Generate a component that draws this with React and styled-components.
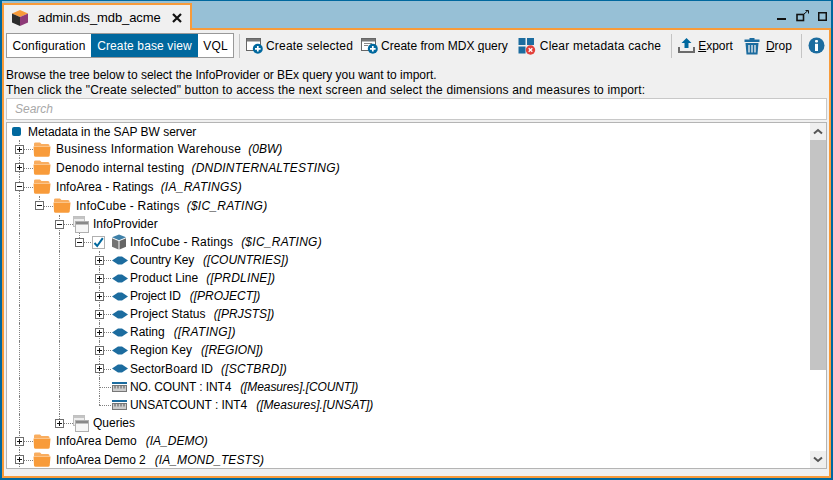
import React from "react";
import styled, { createGlobalStyle } from "styled-components";

const GlobalStyle = createGlobalStyle`
  html, body { margin: 0; padding: 0; background: #f0f0f0; }
  * { box-sizing: border-box; }
`;

const Window = styled.div`
  width: 833px;
  height: 480px;
  border: 2px solid #00689e;
  border-top-width: 1px;
  display: flex;
  flex-direction: column;
  overflow: hidden;
  font-family: "Liberation Sans", Arial, sans-serif;
  font-size: 12px;
  color: #000;
`;
const TabStrip = styled.div`
  height: 27px;
  flex: none;
  background: #97c0d6;
  display: flex;
  align-items: flex-end;
  justify-content: space-between;
`;
const Tab = styled.div`
  width: 190px;
  height: 27px;
  margin-bottom: -2px;
  position: relative;
  z-index: 1;
  background: #f0f0f0;
  border: 2px solid #f89b3a;
  border-bottom: none;
  display: flex;
  align-items: center;
  padding-left: 7px;
  font-size: 13px;
`;
const TabTitle = styled.span`
  margin-left: 9px;
  width: 134px;
  letter-spacing: -0.1px;
`;
const WindowControls = styled.div`
  display: flex;
  align-items: center;
  gap: 9px;
  padding: 0 4px 6px 0;
`;
const Body = styled.div`
  flex: 1;
  min-height: 0;
  border: 2px solid #f89b3a;
  background: #f0f0f0;
  padding: 3px 2px 7px;
  display: flex;
  flex-direction: column;
`;
const Toolbar = styled.div`
  height: 25px;
  flex: none;
  display: flex;
  align-items: center;
`;
const Segmented = styled.div`
  height: 25px;
  display: flex;
  border: 1px solid #999;
  background: #fff;
`;
const Segment = styled.div`
  width: ${(p) => p.$w}px;
  display: flex;
  align-items: center;
  justify-content: center;
  letter-spacing: 0.12px;
  background: ${(p) => (p.$active ? "#00689e" : "#fff")};
  color: ${(p) => (p.$active ? "#fff" : "#000")};
`;
const Separator = styled.div`
  width: 1px;
  height: 24px;
  background: #c4c4c4;
  margin: 0 ${(p) => p.$right}px 0 ${(p) => p.$left}px;
`;
const ToolButton = styled.div`
  display: flex;
  align-items: center;
  gap: ${(p) => p.$gap}px;
  margin-right: ${(p) => p.$after}px;
  white-space: nowrap;
  letter-spacing: ${(p) => p.$t || 0}px;
`;
const Help = styled.div`
  margin-top: 5px;
  height: 33px;
  flex: none;
  padding-top: 5px;
  line-height: 15px;
  white-space: nowrap;
`;
const HelpLine = styled.div`
  letter-spacing: ${(p) => p.$t}px;
`;
const Search = styled.div`
  height: 22px;
  flex: none;
  margin-top: 2px;
  background: #fff;
  border: 1px solid #c8c8c8;
  display: flex;
  align-items: center;
  padding-left: 8px;
  font-style: italic;
  color: #a8a8a8;
`;
const Tree = styled.div`
  margin-top: 2px;
  flex: 1;
  min-height: 0;
  background: #fff;
  border: 1px solid #b4b4b4;
  display: flex;
`;
const Rows = styled.div`
  flex: 1;
  min-width: 0;
  overflow: hidden;
  padding-left: 2px;
`;
const Row = styled.div`
  height: ${(p) => p.$h}px;
  display: flex;
  align-items: stretch;
  white-space: nowrap;
`;
const Guide = styled.div`
  width: 20px;
  flex: none;
  position: relative;
  &::before {
    content: "";
    display: ${(p) => (p.$line ? "block" : "none")};
    position: absolute;
    left: 10px;
    top: 0;
    bottom: 0;
    border-left: 1px dotted #808080;
  }
`;
const Connector = styled.div`
  width: 20px;
  flex: none;
  position: relative;
  display: flex;
  align-items: center;
  &::before {
    content: "";
    position: absolute;
    left: 10px;
    top: 0;
    bottom: ${(p) => (p.$last ? "50%" : "0")};
    border-left: 1px dotted #808080;
  }
  &::after {
    content: "";
    position: absolute;
    left: 10px;
    right: -4px;
    top: 50%;
    border-top: 1px dotted #808080;
  }
`;
const Expander = styled.div`
  position: relative;
  z-index: 1;
  margin-left: 6px;
  width: 9px;
  height: 9px;
  background: #fff;
  border: 1px solid #6e6e6e;
  &::before {
    content: "";
    position: absolute;
    left: 1px;
    right: 1px;
    top: 3px;
    height: 1px;
    background: #111;
  }
  &::after {
    content: "";
    display: ${(p) => (p.$open ? "none" : "block")};
    position: absolute;
    top: 1px;
    bottom: 1px;
    left: 3px;
    width: 1px;
    background: #111;
  }
`;
const IconSlot = styled.div`
  position: relative;
  z-index: 1;
  flex: none;
  width: ${(p) => p.$w}px;
  margin-left: ${(p) => p.$ml}px;
  display: flex;
  align-items: center;
  justify-content: center;
  background: #fff;
`;
const CheckBox = styled.div`
  position: relative;
  z-index: 1;
  flex: none;
  align-self: center;
  width: 13px;
  height: 13px;
  margin: 0 6px 0 3px;
  background: #fff;
  border: 1px solid #b0b0b0;
  display: flex;
  align-items: center;
  justify-content: center;
`;
const Label = styled.span`
  align-self: center;
  margin-left: ${(p) => p.$ml}px;
  letter-spacing: ${(p) => p.$t || 0}px;
`;
const Code = styled.span`
  align-self: center;
  margin-left: ${(p) => p.$gap}px;
  font-style: italic;
  letter-spacing: ${(p) => p.$t || 0}px;
`;
const RootMark = styled.div`
  align-self: center;
  width: 9px;
  height: 9px;
  margin-left: 3px;
  border-radius: 2px;
  background: #00689e;
`;
const Scrollbar = styled.div`
  width: 16px;
  flex: none;
  display: flex;
  flex-direction: column;
`;
const ScrollButton = styled.div`
  height: 17px;
  flex: none;
  background: #efefef;
  display: flex;
  align-items: center;
  justify-content: center;
`;
const Thumb = styled.div`
  height: 230px;
  flex: none;
  background: #c4c4c4;
`;
const Track = styled.div`
  flex: 1;
  background: #fff;
`;

const Box = () => (
  <svg width="18" height="18" viewBox="0 0 18 18">
    <path d="M9 1 L17 4.5 L9 8 L1 4.5Z" fill="#f89b3a" />
    <path d="M1 4.5 L9 8 V17 L1 13.5Z" fill="#2d2d2d" />
    <path d="M17 4.5 L9 8 V17 L17 13.5Z" fill="#8e3a78" />
  </svg>
);
const Close = () => (
  <svg width="10" height="10" viewBox="0 0 10 10">
    <path d="M1 1 L9 9 M9 1 L1 9" stroke="#111" strokeWidth="2.2" />
  </svg>
);
const Minimize = () => (
  <svg width="10" height="10" viewBox="0 0 10 10">
    <rect x="0" y="7" width="9" height="2" fill="#111" />
  </svg>
);
const Restore = () => (
  <svg width="13" height="12" viewBox="0 0 13 12">
    <rect x="1" y="4.5" width="6.5" height="6" fill="none" stroke="#111" strokeWidth="1.6" />
    <path d="M8 4 L12 0.5 M9.5 0.5 H12.5 V3.5" fill="none" stroke="#111" />
  </svg>
);
const Maximize = () => (
  <svg width="9" height="9" viewBox="0 0 9 9">
    <rect x="0.75" y="0.75" width="7.5" height="7.5" fill="none" stroke="#111" strokeWidth="1.5" />
  </svg>
);
const PlusBadge = () => (
  <>
    <circle cx="11.8" cy="11.8" r="5" fill="#00689e" />
    <path d="M9 11.8 H14.6 M11.8 9 V14.6" stroke="#fff" strokeWidth="1.7" />
  </>
);
const CreateIcon = () => (
  <svg width="17" height="17" viewBox="0 0 17 17">
    <rect x="0.5" y="1.5" width="14" height="12" fill="#fff" stroke="#666" />
    <rect x="1" y="2" width="13" height="2.5" fill="#777" />
    <PlusBadge />
  </svg>
);
const MdxIcon = () => (
  <svg width="17" height="17" viewBox="0 0 17 17">
    <rect x="0.5" y="1.5" width="14" height="12" fill="#fff" stroke="#666" />
    <rect x="1" y="2" width="13" height="2.5" fill="#777" />
    <path d="M3 6.5 H11 M3 8.5 H7" stroke="#888" />
    <PlusBadge />
  </svg>
);
const ClearIcon = () => (
  <svg width="18" height="18" viewBox="0 0 18 18">
    <rect x="0.5" y="1" width="7" height="7" fill="#1c6c9f" />
    <rect x="9" y="1" width="7" height="7" fill="#1c6c9f" />
    <rect x="0.5" y="9.5" width="7" height="7" fill="#1c6c9f" />
    <circle cx="12.5" cy="13" r="4.7" fill="#e2403a" />
    <path d="M10.7 11.2 L14.3 14.8 M14.3 11.2 L10.7 14.8" stroke="#fff" strokeWidth="1.3" />
  </svg>
);
const ExportIcon = () => (
  <svg width="17" height="17" viewBox="0 0 17 17">
    <path d="M8.5 1 L13.5 6 H10.5 V11 H6.5 V6 H3.5Z" fill="#00689e" />
    <path d="M1 10 V15 H16 V10" fill="none" stroke="#6b6b6b" strokeWidth="2" />
  </svg>
);
const TrashIcon = () => (
  <svg width="16" height="18" viewBox="0 0 16 18">
    <path d="M5.5 1 H10.5 V2.5 H15.5 V5 H0.5 V2.5 H5.5Z" fill="#1c6c9f" />
    <path d="M1.5 6 H14.5 L13.5 17.5 H2.5Z" fill="#1c6c9f" />
    <path d="M5 8 V15.5 M8 8 V15.5 M11 8 V15.5" stroke="#f0f0f0" strokeWidth="1.3" />
  </svg>
);
const InfoIcon = () => (
  <svg width="17" height="17" viewBox="0 0 17 17">
    <circle cx="8.5" cy="8.5" r="8" fill="#1c6c9f" />
    <rect x="7" y="3" width="3" height="2.6" rx="1" fill="#fff" />
    <rect x="7" y="6.8" width="3" height="7.2" fill="#fff" />
  </svg>
);
const Chevron = ({ down }) => (
  <svg width="10" height="7" viewBox="0 0 10 7">
    <path d={down ? "M1 1.5 L5 5 L9 1.5" : "M1 5.5 L5 2 L9 5.5"} fill="none" stroke="#555" strokeWidth="2" />
  </svg>
);
const Folder = () => (
  <svg width="18" height="15" viewBox="0 0 18 15">
    <path d="M1 1.8 Q1 0.5 2.5 0.5 H7 L8.5 2 H15 Q16.5 2 16.5 3.5 V4 H1Z" fill="#f9ad5f" />
    <path d="M1 4 H16.5 V4.6 H1Z" fill="#fde3c6" />
    <path d="M0.5 4.6 H17.5 L16.7 13.5 Q16.6 14.7 15 14.7 H2.5 Q1.2 14.7 1 13.5Z" fill="#f89b3a" />
  </svg>
);
const Panels = () => (
  <svg width="16" height="17" viewBox="0 0 16 17">
    <rect x="0.5" y="0.5" width="11" height="10" fill="#eee" stroke="#c0c0c0" />
    <rect x="1" y="1" width="10" height="2" fill="#c4c4c4" />
    <rect x="2.5" y="5.5" width="13" height="11" fill="#f6f6f6" stroke="#b0b0b0" />
    <rect x="3" y="6" width="12" height="2.5" fill="#888" />
  </svg>
);
const Cube = () => (
  <svg width="16" height="16" viewBox="0 0 16 16">
    <path d="M8 0.5 L15 3.3 L8 6.3 L1 3.3Z" fill="#3f80a8" />
    <path d="M1 4.3 L7.5 7 V15.5 L1 12.7Z" fill="#737373" />
    <path d="M15 4.3 L8.5 7 V15.5 L15 12.7Z" fill="#666" />
  </svg>
);
const Dimension = () => (
  <svg width="16" height="9" viewBox="0 0 16 9">
    <path d="M0 4.5 L6 0.5 H10 L16 4.5 L10 8.5 H6Z" fill="#1c6c9f" />
  </svg>
);
const Measure = () => (
  <svg width="15" height="10" viewBox="0 0 15 10">
    <rect x="0" y="0" width="15" height="2" fill="#1c6c9f" />
    <rect x="0.5" y="3.5" width="14" height="6" fill="#ccc" stroke="#777" />
    <path d="M3 4 V6.5 M6 4 V6.5 M9 4 V6.5 M12 4 V6.5" stroke="#555" />
  </svg>
);
const Check = () => (
  <svg width="11" height="11" viewBox="0 0 11 11">
    <path d="M1.5 6 L4.2 9 L9.8 1.2" fill="none" stroke="#00689e" strokeWidth="2" />
  </svg>
);

const dims = [true, false, true, false];

// guides: one flag per ancestor column, true where the parent's line runs on
// t / ct nudge tracking so the labels end where the reference's hinted text does
const rows = [
  { h: 18, guides: [], kind: "folder", label: "Business Information Warehouse", t: 0.3, code: "(0BW)", gap: 7 },
  { h: 19, guides: [], kind: "folder", label: "Denodo internal testing", t: 0.22, code: "(DNDINTERNALTESTING)", ct: 0.2, gap: 7 },
  { h: 19, guides: [], kind: "folder", open: true, label: "InfoArea - Ratings", t: 0.05, code: "(IA_RATINGS)", ct: 0.25, gap: 7 },
  { h: 19, guides: [true], last: true, kind: "folder", open: true, label: "InfoCube - Ratings", t: 0.2, code: "($IC_RATING)", ct: 0.25, gap: 7 },
  { h: 18, guides: [true, false], kind: "panels", open: true, label: "InfoProvider" },
  { h: 18, guides: [true, false, true], last: true, kind: "cube", open: true, label: "InfoCube - Ratings", t: 0.17, code: "($IC_RATING)", ct: 0.25, gap: 8 },
  { h: 18, guides: dims, kind: "dim", label: "Country Key", t: -0.18, code: "([COUNTRIES])", gap: 9 },
  { h: 18, guides: dims, kind: "dim", label: "Product Line", t: 0.08, code: "([PRDLINE])", ct: 0.2, gap: 8 },
  { h: 18, guides: dims, kind: "dim", label: "Project ID", t: -0.2, code: "([PROJECT])", gap: 9 },
  { h: 18, guides: dims, kind: "dim", label: "Project Status", t: 0.07, code: "([PRJSTS])", gap: 8 },
  { h: 18, guides: dims, kind: "dim", label: "Rating", code: "([RATING])", ct: 0.3, gap: 9 },
  { h: 18, guides: dims, kind: "dim", label: "Region Key", code: "([REGION])", gap: 9 },
  { h: 19, guides: dims, kind: "dim", label: "SectorBoard ID", t: 0.07, code: "([SCTBRD])", ct: 0.2, gap: 8 },
  { h: 18, guides: dims, kind: "measure", leaf: true, label: "NO. COUNT : INT4", t: -0.12, code: "([Measures].[COUNT])", ct: -0.1, gap: 9 },
  { h: 18, guides: dims, kind: "measure", leaf: true, last: true, label: "UNSATCOUNT : INT4", t: -0.06, code: "([Measures].[UNSAT])", gap: 9 },
  { h: 18, guides: [true, false], last: true, kind: "panels", label: "Queries" },
  { h: 18, guides: [], kind: "folder", label: "InfoArea Demo", code: "(IA_DEMO)", gap: 9 },
  { h: 19, guides: [], kind: "folder", label: "InfoArea Demo 2", t: -0.07, code: "(IA_MOND_TESTS)", ct: 0.1, gap: 9 },
];

function RowIcon({ kind }) {
  if (kind === "folder") return <IconSlot $w={18} $ml={4}><Folder /></IconSlot>;
  if (kind === "panels") return <IconSlot $w={16} $ml={4}><Panels /></IconSlot>;
  if (kind === "dim") return <IconSlot $w={16} $ml={3}><Dimension /></IconSlot>;
  if (kind === "measure") return <IconSlot $w={15} $ml={3}><Measure /></IconSlot>;
  return (
    <>
      <CheckBox><Check /></CheckBox>
      <IconSlot $w={16} $ml={0}><Cube /></IconSlot>
    </>
  );
}

function TreeRow({ row }) {
  const gap = { folder: 5, panels: 4, dim: 2 }[row.kind] || 3;
  return (
    <Row $h={row.h}>
      {row.guides.map((line, i) => (
        <Guide key={i} $line={line} />
      ))}
      <Connector $last={row.last}>
        {!row.leaf && <Expander $open={row.open} />}
      </Connector>
      <RowIcon kind={row.kind} />
      <Label $ml={gap} $t={row.t}>{row.label}</Label>
      {row.code && <Code $gap={row.gap} $t={row.ct}>{row.code}</Code>}
    </Row>
  );
}

export default function App() {
  return (
    <>
      <GlobalStyle />
      <Window>
        <TabStrip>
          <Tab>
            <Box />
            <TabTitle>admin.ds_mdb_acme</TabTitle>
            <Close />
          </Tab>
          <WindowControls>
            <Minimize />
            <Restore />
            <Maximize />
          </WindowControls>
        </TabStrip>
        <Body>
          <Toolbar>
            <Segmented>
              <Segment $w={84}>Configuration</Segment>
              <Segment $w={107} $active>Create base view</Segment>
              <Segment $w={35}>VQL</Segment>
            </Segmented>
            <Separator $left={5} $right={6} />
            <ToolButton $gap={3} $after={8} $t={0.2}><CreateIcon />Create selected</ToolButton>
            <ToolButton $gap={3} $after={10}><MdxIcon /><span>Create from MDX <u>q</u>uery</span></ToolButton>
            <ToolButton $gap={4} $after={10} $t={0.2}><ClearIcon />Clear metadata cache</ToolButton>
            <Separator $left={0} $right={6} />
            <ToolButton $gap={3} $after={11}><ExportIcon /><span><u>E</u>xport</span></ToolButton>
            <ToolButton $gap={6} $after={9}><TrashIcon /><span><u>D</u>rop</span></ToolButton>
            <Separator $left={0} $right={6} />
            <InfoIcon />
          </Toolbar>
          <Help>
            <HelpLine $t={-0.02}>Browse the tree below to select the InfoProvider or BEx query you want to import.</HelpLine>
            <HelpLine $t={0.16}>Then click the "Create selected" button to access the next screen and select the dimensions and measures to import:</HelpLine>
          </Help>
          <Search>Search</Search>
          <Tree>
            <Rows>
              <Row $h={17}>
                <RootMark />
                <Label $ml={7} $t={-0.03}>Metadata in the SAP BW server</Label>
              </Row>
              {rows.map((row, i) => (
                <TreeRow key={i} row={row} />
              ))}
            </Rows>
            <Scrollbar>
              <ScrollButton><Chevron /></ScrollButton>
              <Thumb />
              <Track />
              <ScrollButton><Chevron down /></ScrollButton>
            </Scrollbar>
          </Tree>
        </Body>
      </Window>
    </>
  );
}
